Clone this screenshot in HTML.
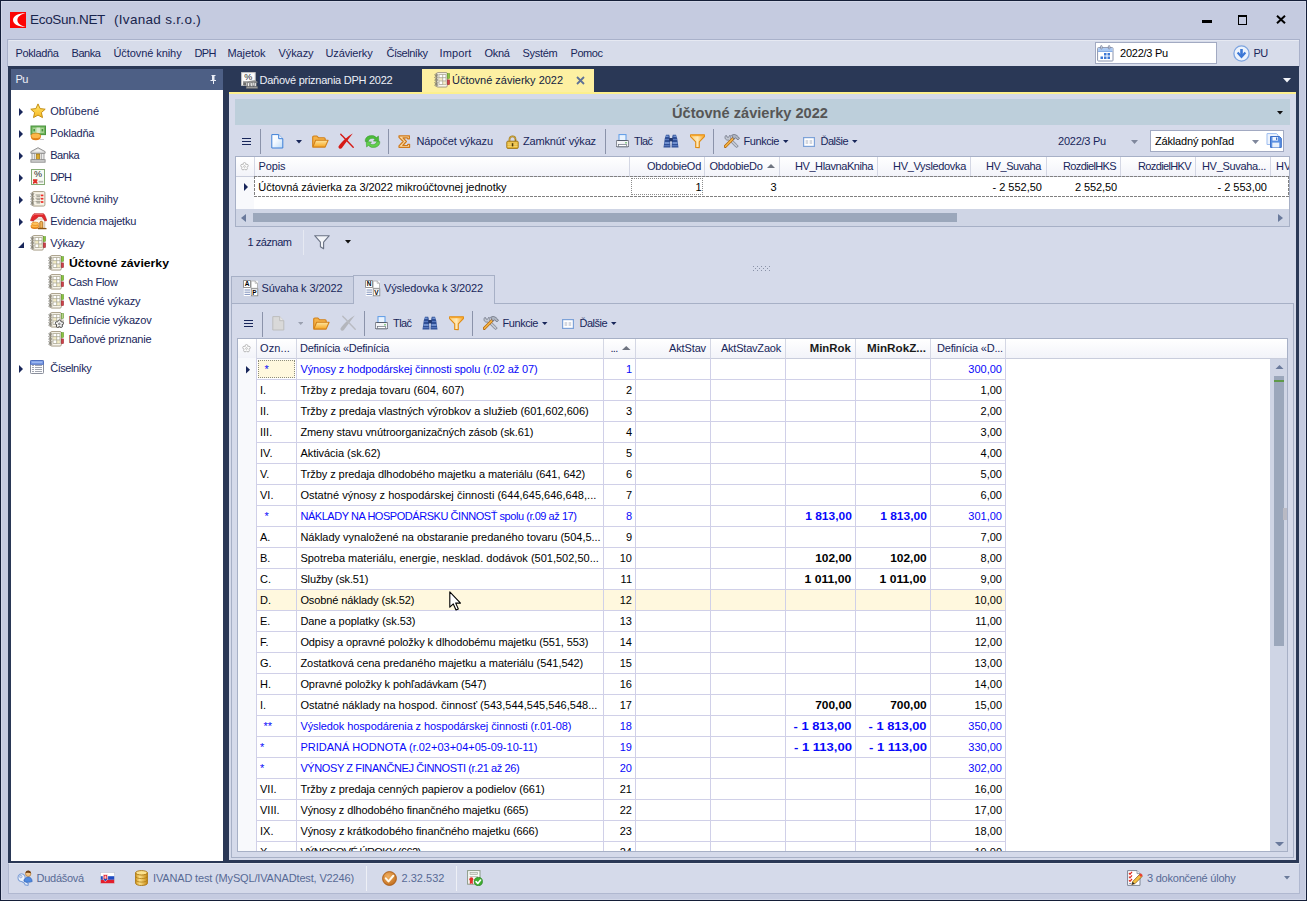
<!DOCTYPE html>
<html lang="sk"><head><meta charset="utf-8"><title>EcoSun.NET</title><style>
html,body{margin:0;padding:0}
body{width:1307px;height:901px;position:relative;overflow:hidden;background:#c5cbe0;font-family:"Liberation Sans",sans-serif;font-size:11px;color:#18265a}
div,span.t,svg{position:absolute;box-sizing:border-box}
span.t{white-space:nowrap;line-height:14px}
.b{font-weight:bold}
.k{color:#000}
.blue{color:#0808fa}
.w{color:#edf0f8}
.g{color:#586a96}
</style></head><body>
<div style="left:0px;top:0px;width:1307px;height:901px;background:#c5cbe0;border:1px solid #141e38"></div>
<div style="left:1px;top:1px;width:1305px;height:899px;border:1px solid #d2d7e8"></div>
<svg style="left:10px;top:12px" width="16" height="16" viewBox="0 0 16 16"><rect width="16" height="16" fill="#fc0404"/><path d="M15.500 1.200C9 1 3 3.600 3 8s6 7 12.500 6.800C10.500 13.600 7.400 11.200 7.400 8s3.100-5.600 8.100-6.800z" fill="#fff"/></svg>
<span class="t" style="left:30px;top:12px;font-size:13.5px;line-height:16px;color:#18244c;letter-spacing:-0.30px;">EcoSun.NET</span>
<span class="t" style="left:114px;top:12px;font-size:13.5px;line-height:16px;color:#18244c;letter-spacing:0.30px;">(Ivanad s.r.o.)</span>
<div style="left:1202px;top:20px;width:10px;height:3px;background:#000"></div>
<div style="left:1238px;top:15px;width:9px;height:10px;border:1px solid #000;border-top-width:2px"></div>
<svg style="left:1276px;top:15px" width="10" height="9" viewBox="0 0 10 9"><path d="M1 .8l8 7.400M9 .8L1 8.200" stroke="#000" stroke-width="2"/></svg>
<div style="left:7px;top:39px;width:1293px;height:28px;background:#d7dcea;border:1px solid #a9b1ca;border-bottom:none"></div>
<div style="left:9px;top:40px;width:1290px;height:1px;background:#e6e9f2"></div>
<span class="t" style="left:15.5px;top:46px;letter-spacing:-0.36px;">Pokladňa</span>
<span class="t" style="left:71.5px;top:46px;letter-spacing:-0.44px;">Banka</span>
<span class="t" style="left:113.5px;top:46px;letter-spacing:-0.08px;">Účtovné knihy</span>
<span class="t" style="left:194.5px;top:46px;letter-spacing:-0.70px;">DPH</span>
<span class="t" style="left:227.5px;top:46px;letter-spacing:-0.08px;">Majetok</span>
<span class="t" style="left:278.5px;top:46px;letter-spacing:-0.08px;">Výkazy</span>
<span class="t" style="left:325.5px;top:46px;letter-spacing:-0.14px;">Uzávierky</span>
<span class="t" style="left:386.5px;top:46px;letter-spacing:-0.47px;">Číselníky</span>
<span class="t" style="left:439.5px;top:46px;letter-spacing:0.14px;">Import</span>
<span class="t" style="left:484.5px;top:46px;letter-spacing:-0.32px;">Okná</span>
<span class="t" style="left:522.5px;top:46px;letter-spacing:-0.28px;">Systém</span>
<span class="t" style="left:570.5px;top:46px;letter-spacing:-0.45px;">Pomoc</span>
<div style="left:1095px;top:42px;width:122px;height:22px;background:#fff;border:1px solid #a2aac2"></div>
<svg style="left:1097px;top:45px" width="17" height="17" viewBox="0 0 17 17"><rect x=".6" y="2.600" width="15.400" height="13.400" rx=".8" fill="#fff" stroke="#8a94ae" stroke-width="1"/><rect x="1.100" y="3.100" width="14.400" height="3.200" fill="#a9c8f2"/><path d="M1.100 6.500h14.400" stroke="#6d9ae0" stroke-width=".8"/><rect x="3.600" y=".6" width="1.500" height="3.400" rx=".7" fill="#e8ecf4" stroke="#6c7690" stroke-width=".7"/><rect x="11.400" y=".6" width="1.500" height="3.400" rx=".7" fill="#e8ecf4" stroke="#6c7690" stroke-width=".7"/><g fill="#3d78d6"><rect x="7" y="8" width="2.500" height="2.500"/><rect x="10.500" y="8" width="2.500" height="2.500"/><rect x="3.500" y="11.500" width="2.500" height="2.500"/><rect x="7" y="11.500" width="2.500" height="2.500"/><rect x="10.500" y="11.500" width="2.500" height="2.500"/></g></svg>
<span class="t k" style="left:1120px;top:46px;letter-spacing:-0.24px;">2022/3 Pu</span>
<svg style="left:1233px;top:44.5px" width="17" height="17" viewBox="0 0 17 17"><circle cx="8.500" cy="8.500" r="7.600" fill="#edf3fc" stroke="#7da4e0" stroke-width="1.300"/><path d="M8.500 4v7.500" stroke="#3d78d6" stroke-width="2.600"/><path d="M4.600 7.600l3.900 4.200 3.900-4.200" fill="none" stroke="#3d78d6" stroke-width="2.200" stroke-linejoin="miter"/></svg>
<span class="t" style="left:1253.5px;top:46px;letter-spacing:-0.70px;">PU</span>
<div style="left:8px;top:66px;width:1291px;height:797px;background:#2a3856"></div>
<div style="left:11px;top:69px;width:212px;height:21px;background:#4d5f85"></div>
<span class="t w" style="left:15.5px;top:72px;letter-spacing:-0.70px;">Pu</span>
<svg style="left:210px;top:74.5px" width="7" height="9" viewBox="0 0 7 9"><path d="M1.500 0h4v1h-1v4h1.500v1H4v3H3V6H.5V5H2V1H1.500z" fill="#e9edf6"/></svg>
<div style="left:11px;top:90px;width:212px;height:771px;background:#fff"></div>
<svg style="left:19px;top:108px" width="4" height="8" viewBox="0 0 4 8"><path d="M0 0L4 4L0 8Z" fill="#18265a"/></svg>
<svg style="left:30px;top:103px" width="16" height="16" viewBox="0 0 16 16"><defs><linearGradient id="st" x1="0" y1="0" x2="0" y2="1"><stop offset="0" stop-color="#ffe770"/><stop offset="1" stop-color="#f8b820"/></linearGradient></defs><path d="M8 .9l2.100 4.700 5.100.6-3.800 3.400 1.100 5L8 12.100l-4.500 2.500 1.100-5L.8 6.200l5.100-.6z" fill="url(#st)" stroke="#c48e14" stroke-width="1" stroke-linejoin="round"/></svg>
<span class="t" style="left:50.2px;top:104px;letter-spacing:0.07px;">Obľúbené</span>
<svg style="left:19px;top:130px" width="4" height="8" viewBox="0 0 4 8"><path d="M0 0L4 4L0 8Z" fill="#18265a"/></svg>
<svg style="left:30px;top:125px" width="16" height="16" viewBox="0 0 16 16"><rect x="1" y="1" width="14.500" height="8.600" fill="#6fb55a" stroke="#4a9440" stroke-width="1"/><rect x="2.600" y="2.600" width="11.300" height="5.400" fill="#a9d596"/><rect x="6.500" y="2.600" width="3.600" height="5.400" fill="#d9eccf"/><rect x="3.400" y="4" width="1.600" height="2.400" fill="#4a9440"/><rect x="11.600" y="4" width="1.600" height="2.400" fill="#4a9440"/><ellipse cx="5.800" cy="12.300" rx="4.800" ry="2.900" fill="#e27c14"/><ellipse cx="5.800" cy="10.900" rx="4.800" ry="2.700" fill="#fdb84a" stroke="#dd7c12" stroke-width=".7"/><path d="M10 14.500h4" stroke="#c9c9c9" stroke-width="1"/></svg>
<span class="t" style="left:50.2px;top:126px;letter-spacing:-0.23px;">Pokladňa</span>
<svg style="left:19px;top:152px" width="4" height="8" viewBox="0 0 4 8"><path d="M0 0L4 4L0 8Z" fill="#18265a"/></svg>
<svg style="left:30px;top:147px" width="16" height="16" viewBox="0 0 16 16"><path d="M8 .7L.9 4.600v1.700h14.200V4.600z" fill="#dcdcdc" stroke="#8c8c8c" stroke-width=".9" stroke-linejoin="round"/><path d="M8 2L3.300 4.600h9.400z" fill="#f4f4f4"/><rect x="2" y="6.600" width="2.800" height="6" fill="#ececec" stroke="#8c8c8c" stroke-width=".8"/><rect x="11.200" y="6.600" width="2.800" height="6" fill="#ececec" stroke="#8c8c8c" stroke-width=".8"/><rect x="6.300" y="7" width="3.400" height="5.600" fill="#d9a82c" stroke="#9a7414" stroke-width=".7"/><rect x=".9" y="12.700" width="14.200" height="2.500" fill="#d2d2d2" stroke="#8c8c8c" stroke-width=".9"/></svg>
<span class="t" style="left:50.2px;top:148px;letter-spacing:-0.44px;">Banka</span>
<svg style="left:19px;top:174px" width="4" height="8" viewBox="0 0 4 8"><path d="M0 0L4 4L0 8Z" fill="#18265a"/></svg>
<svg style="left:30px;top:169px" width="16" height="16" viewBox="0 0 16 16"><rect x="1.500" y=".5" width="13" height="15" fill="#f7faf4" stroke="#84ab74" stroke-width="1"/><text x="8" y="8.300" font-size="9" font-family="Liberation Sans,sans-serif" text-anchor="middle" fill="#1a1a1a">%</text><path d="M3 10.200h4.400v1.600l-.8.600.8.600v2l-2.200-.9-2.200.9v-2l.8-.6-.8-.6z" fill="#de2f28"/><rect x="8.600" y="11.800" width="4.600" height="1.800" fill="#b8bcb4"/></svg>
<span class="t" style="left:50.2px;top:170px;letter-spacing:-0.70px;">DPH</span>
<svg style="left:19px;top:196px" width="4" height="8" viewBox="0 0 4 8"><path d="M0 0L4 4L0 8Z" fill="#18265a"/></svg>
<svg style="left:30px;top:191px" width="16" height="16" viewBox="0 0 16 17" preserveAspectRatio="none"><rect x="2.500" y=".6" width="12.400" height="15.400" rx="1.300" fill="#f6f2e6" stroke="#a59c86" stroke-width="1"/><g fill="none" stroke="#77746a" stroke-width=".8"><ellipse cx="2.300" cy="3" rx="1.600" ry=".9"/><ellipse cx="2.300" cy="5.800" rx="1.600" ry=".9"/><ellipse cx="2.300" cy="8.600" rx="1.600" ry=".9"/><ellipse cx="2.300" cy="11.400" rx="1.600" ry=".9"/><ellipse cx="2.300" cy="14" rx="1.600" ry=".9"/></g><g stroke="#8e8a7c" stroke-width=".8"><path d="M5.500 4.200h5M5.500 7.700h5M5.500 11.200h5"/></g><g fill="#a9a79c"><rect x="6.500" y="4.800" width="3.500" height="1.500"/><rect x="6.500" y="8.300" width="3.500" height="1.500"/><rect x="6.500" y="11.800" width="3.500" height="1.500"/></g><g fill="#ee2a24"><rect x="10.800" y="3.800" width="2.600" height="1.800"/><rect x="10.800" y="7.300" width="2.600" height="1.800"/><rect x="10.800" y="10.800" width="2.600" height="1.800"/></g></svg>
<span class="t" style="left:50.2px;top:192px;letter-spacing:-0.08px;">Účtovné knihy</span>
<svg style="left:19px;top:218px" width="4" height="8" viewBox="0 0 4 8"><path d="M0 0L4 4L0 8Z" fill="#18265a"/></svg>
<svg style="left:30px;top:213px" width="17" height="17" viewBox="0 0 17 17"><rect x="3.300" y="6" width="11.500" height="9.200" fill="#fbf8f2" stroke="#b9a88c" stroke-width=".7"/><path d="M.5 7.600C1.400 4.500 2.800 1.600 4 .7h9.500c1.300 1 2.400 3.800 3.200 6.900l-1.800.3L12 3.800 8.800 3.600 3 8z" fill="#e3262a" stroke="#b01418" stroke-width=".6" stroke-linejoin="round"/><path d="M2.800 3.200C3.400 2 3.900 1.400 4.300 1.200h9" stroke="#f58a86" stroke-width=".9" fill="none"/><path d="M9.800 15.200V9.800c0-1 .6-1.500 1.500-1.500s1.500.5 1.500 1.500v5.400z" fill="#f0b45a" stroke="#a4600e" stroke-width=".8"/><path d="M8 15.600h8.500" stroke="#8a5412" stroke-width="1.300"/><ellipse cx="4.800" cy="14" rx="4" ry="1.900" fill="#e27c14"/><ellipse cx="4.800" cy="13" rx="4" ry="1.800" fill="#fdb84a" stroke="#dd7c12" stroke-width=".6"/><ellipse cx="5.200" cy="10.800" rx="3.600" ry="1.700" fill="#fdc25e" stroke="#dd7c12" stroke-width=".6"/></svg>
<span class="t" style="left:50.2px;top:214px;letter-spacing:-0.19px;">Evidencia majetku</span>
<svg style="left:18px;top:241.5px" width="6" height="6" viewBox="0 0 6 6"><path d="M6 0V6H0Z" fill="#18265a"/></svg>
<svg style="left:30px;top:235px" width="16" height="16" viewBox="0 0 16 17" preserveAspectRatio="none"><rect x="2.500" y=".6" width="10.800" height="15.400" rx="1.300" fill="#f8f5ec" stroke="#a59c86" stroke-width="1"/><g fill="none" stroke="#77746a" stroke-width=".8"><ellipse cx="2.300" cy="3" rx="1.600" ry=".9"/><ellipse cx="2.300" cy="5.800" rx="1.600" ry=".9"/><ellipse cx="2.300" cy="8.600" rx="1.600" ry=".9"/><ellipse cx="2.300" cy="11.400" rx="1.600" ry=".9"/><ellipse cx="2.300" cy="14" rx="1.600" ry=".9"/></g><rect x="13.300" y="1.800" width="2.200" height="5" fill="#8cc63e" stroke="#5f962a" stroke-width=".6"/><rect x="13.300" y="8.400" width="2.200" height="5" fill="#d2404a" stroke="#9a2a30" stroke-width=".6"/><rect x="5" y="2.800" width="7" height="10.600" fill="#fff" stroke="#a8a48e" stroke-width=".8"/><rect x="5.400" y="6.200" width="3.200" height="3" fill="#f4ecc4"/><rect x="8.800" y="9.800" width="2.800" height="3.200" fill="#f4ecc4"/><path d="M5 6h7M5 9.500h7M8.700 2.800v10.600" stroke="#a8a48e" stroke-width=".8"/></svg>
<span class="t" style="left:50.2px;top:236px;letter-spacing:-0.24px;">Výkazy</span>
<svg style="left:48px;top:255px" width="16" height="16" viewBox="0 0 16 17" preserveAspectRatio="none"><rect x="2.500" y=".6" width="10.800" height="15.400" rx="1.300" fill="#f8f5ec" stroke="#a59c86" stroke-width="1"/><g fill="none" stroke="#77746a" stroke-width=".8"><ellipse cx="2.300" cy="3" rx="1.600" ry=".9"/><ellipse cx="2.300" cy="5.800" rx="1.600" ry=".9"/><ellipse cx="2.300" cy="8.600" rx="1.600" ry=".9"/><ellipse cx="2.300" cy="11.400" rx="1.600" ry=".9"/><ellipse cx="2.300" cy="14" rx="1.600" ry=".9"/></g><rect x="13.300" y="1.800" width="2.200" height="5" fill="#8cc63e" stroke="#5f962a" stroke-width=".6"/><rect x="13.300" y="8.400" width="2.200" height="5" fill="#d2404a" stroke="#9a2a30" stroke-width=".6"/><rect x="5" y="2.800" width="7" height="10.600" fill="#fff" stroke="#a8a48e" stroke-width=".8"/><rect x="5.400" y="6.200" width="3.200" height="3" fill="#f4ecc4"/><rect x="8.800" y="9.800" width="2.800" height="3.200" fill="#f4ecc4"/><path d="M5 6h7M5 9.500h7M8.700 2.800v10.600" stroke="#a8a48e" stroke-width=".8"/></svg>
<span class="t b k" style="left:68.5px;top:256px;transform:scaleX(1.112);transform-origin:0 50%;">Účtovné závierky</span>
<svg style="left:48px;top:274px" width="16" height="16" viewBox="0 0 16 17" preserveAspectRatio="none"><rect x="2.500" y=".6" width="10.800" height="15.400" rx="1.300" fill="#f8f5ec" stroke="#a59c86" stroke-width="1"/><g fill="none" stroke="#77746a" stroke-width=".8"><ellipse cx="2.300" cy="3" rx="1.600" ry=".9"/><ellipse cx="2.300" cy="5.800" rx="1.600" ry=".9"/><ellipse cx="2.300" cy="8.600" rx="1.600" ry=".9"/><ellipse cx="2.300" cy="11.400" rx="1.600" ry=".9"/><ellipse cx="2.300" cy="14" rx="1.600" ry=".9"/></g><rect x="13.300" y="1.800" width="2.200" height="5" fill="#8cc63e" stroke="#5f962a" stroke-width=".6"/><rect x="13.300" y="8.400" width="2.200" height="5" fill="#d2404a" stroke="#9a2a30" stroke-width=".6"/><rect x="5" y="2.800" width="7" height="10.600" fill="#fff" stroke="#a8a48e" stroke-width=".8"/><rect x="5.400" y="6.200" width="3.200" height="3" fill="#f4ecc4"/><rect x="8.800" y="9.800" width="2.800" height="3.200" fill="#f4ecc4"/><path d="M5 6h7M5 9.500h7M8.700 2.800v10.600" stroke="#a8a48e" stroke-width=".8"/></svg>
<span class="t" style="left:68.5px;top:275px;letter-spacing:-0.33px;">Cash Flow</span>
<svg style="left:48px;top:293px" width="16" height="16" viewBox="0 0 16 17" preserveAspectRatio="none"><rect x="2.500" y=".6" width="10.800" height="15.400" rx="1.300" fill="#f8f5ec" stroke="#a59c86" stroke-width="1"/><g fill="none" stroke="#77746a" stroke-width=".8"><ellipse cx="2.300" cy="3" rx="1.600" ry=".9"/><ellipse cx="2.300" cy="5.800" rx="1.600" ry=".9"/><ellipse cx="2.300" cy="8.600" rx="1.600" ry=".9"/><ellipse cx="2.300" cy="11.400" rx="1.600" ry=".9"/><ellipse cx="2.300" cy="14" rx="1.600" ry=".9"/></g><rect x="13.300" y="1.800" width="2.200" height="5" fill="#8cc63e" stroke="#5f962a" stroke-width=".6"/><rect x="13.300" y="8.400" width="2.200" height="5" fill="#d2404a" stroke="#9a2a30" stroke-width=".6"/><rect x="5" y="2.800" width="7" height="10.600" fill="#fff" stroke="#a8a48e" stroke-width=".8"/><rect x="5.400" y="6.200" width="3.200" height="3" fill="#f4ecc4"/><rect x="8.800" y="9.800" width="2.800" height="3.200" fill="#f4ecc4"/><path d="M5 6h7M5 9.500h7M8.700 2.800v10.600" stroke="#a8a48e" stroke-width=".8"/></svg>
<span class="t" style="left:68.5px;top:294px;letter-spacing:-0.10px;">Vlastné výkazy</span>
<svg style="left:48px;top:312px" width="16" height="16" viewBox="0 0 16 17" preserveAspectRatio="none"><rect x="2.500" y=".6" width="10.800" height="15.400" rx="1.300" fill="#f8f5ec" stroke="#a59c86" stroke-width="1"/><g fill="none" stroke="#77746a" stroke-width=".8"><ellipse cx="2.300" cy="3" rx="1.600" ry=".9"/><ellipse cx="2.300" cy="5.800" rx="1.600" ry=".9"/><ellipse cx="2.300" cy="8.600" rx="1.600" ry=".9"/><ellipse cx="2.300" cy="11.400" rx="1.600" ry=".9"/><ellipse cx="2.300" cy="14" rx="1.600" ry=".9"/></g><rect x="13.300" y="1.800" width="2.200" height="5" fill="#b8d48c" stroke="#5f962a" stroke-width=".6"/><rect x="13.300" y="8.400" width="2.200" height="5" fill="#e4e0d6" stroke="#b8b4a8" stroke-width=".6"/><rect x="5" y="2.800" width="7" height="10.600" fill="#fff" stroke="#a8a48e" stroke-width=".8"/><rect x="5.400" y="6.200" width="3.200" height="3" fill="#f4ecc4"/><rect x="8.800" y="9.800" width="2.800" height="3.200" fill="#f4ecc4"/><path d="M5 6h7M5 9.500h7M8.700 2.800v10.600" stroke="#a8a48e" stroke-width=".8"/><g fill="#fafafa" stroke="#3c3c3c" stroke-width=".9"><circle cx="11.400" cy="10" r="1.500"/><circle cx="14" cy="11.900" r="1.500"/><circle cx="13" cy="14.900" r="1.500"/><circle cx="9.800" cy="14.900" r="1.500"/><circle cx="8.800" cy="11.900" r="1.500"/></g><circle cx="11.400" cy="12.700" r="2.500" fill="#fafafa"/><circle cx="11.400" cy="12.700" r=".9" fill="none" stroke="#3c3c3c" stroke-width=".7"/></svg>
<span class="t" style="left:68.5px;top:313px;letter-spacing:-0.15px;">Definície výkazov</span>
<svg style="left:48px;top:331px" width="16" height="16" viewBox="0 0 16 17" preserveAspectRatio="none"><rect x="2.500" y=".6" width="10.800" height="15.400" rx="1.300" fill="#f8f5ec" stroke="#a59c86" stroke-width="1"/><g fill="none" stroke="#77746a" stroke-width=".8"><ellipse cx="2.300" cy="3" rx="1.600" ry=".9"/><ellipse cx="2.300" cy="5.800" rx="1.600" ry=".9"/><ellipse cx="2.300" cy="8.600" rx="1.600" ry=".9"/><ellipse cx="2.300" cy="11.400" rx="1.600" ry=".9"/><ellipse cx="2.300" cy="14" rx="1.600" ry=".9"/></g><rect x="13.300" y="1.800" width="2.200" height="5" fill="#8cc63e" stroke="#5f962a" stroke-width=".6"/><rect x="13.300" y="8.400" width="2.200" height="5" fill="#d2404a" stroke="#9a2a30" stroke-width=".6"/><rect x="5" y="2.800" width="7" height="10.600" fill="#fff" stroke="#a8a48e" stroke-width=".8"/><rect x="5.400" y="6.200" width="3.200" height="3" fill="#f4ecc4"/><rect x="8.800" y="9.800" width="2.800" height="3.200" fill="#f4ecc4"/><path d="M5 6h7M5 9.500h7M8.700 2.800v10.600" stroke="#a8a48e" stroke-width=".8"/></svg>
<span class="t" style="left:68.5px;top:332px;letter-spacing:-0.16px;">Daňové priznanie</span>
<svg style="left:19px;top:365px" width="4" height="8" viewBox="0 0 4 8"><path d="M0 0L4 4L0 8Z" fill="#18265a"/></svg>
<svg style="left:30px;top:360px" width="14" height="14" viewBox="0 0 14 14"><rect x=".5" y=".5" width="13" height="13" rx=".8" fill="#fdfdfe" stroke="#8a8f9c" stroke-width="1"/><path d="M.5 4.300V1.300c0-.5.300-.8.800-.8h11.400c.5 0 .8.300.8.800v3z" fill="#7d9ee6" stroke="#5070c0" stroke-width="1"/><path d="M2 2.200h10" stroke="#a9c2f4" stroke-width="1"/><path d="M2 5.500h2M5 5.500h7M2 7.500h2M5 7.500h7M2 9.500h2M5 9.500h7M2 11.500h2M5 11.500h7" stroke="#a2a6b0" stroke-width="1" fill="none"/></svg>
<span class="t" style="left:50.2px;top:361px;letter-spacing:-0.47px;">Číselníky</span>
<svg style="left:241px;top:71.5px" width="17" height="17" viewBox="0 0 17 17"><rect x=".6" y=".6" width="13.600" height="12.800" fill="#fcfcfc" stroke="#c4c4c4" stroke-width="1"/><text x="7.200" y="8" font-size="9" font-family="Liberation Sans,sans-serif" text-anchor="middle" fill="#1a1a1a">%</text><path d="M2.600 8.400l1.800 4.600h-2.400z" fill="#7e7e7e"/><path d="M2.500 9.300h4l7-1 3 1.400v1H2.500z" fill="#8c8c8c"/><g fill="#f2f2f2" stroke="#6c6c6c" stroke-width=".7"><rect x="6.400" y="10.700" width="2" height="4"/><rect x="9.800" y="10.700" width="2" height="4"/><rect x="13.200" y="10.700" width="2" height="4"/></g><rect x="5.200" y="14.700" width="11.500" height="1.700" fill="#9a9a9a" stroke="#6c6c6c" stroke-width=".5"/><rect x="2.600" y="10.500" width="2.800" height="3" fill="#6e6e6e"/></svg>
<span class="t w" style="left:259.5px;top:73px;letter-spacing:-0.26px;">Daňové priznania DPH 2022</span>
<div style="left:422px;top:69px;width:172px;height:24px;background:#fdf0a2"></div>
<svg style="left:434px;top:72px" width="16" height="16" viewBox="0 0 16 17" preserveAspectRatio="none"><rect x="2.500" y=".6" width="10.800" height="15.400" rx="1.300" fill="#f8f5ec" stroke="#a59c86" stroke-width="1"/><g fill="none" stroke="#77746a" stroke-width=".8"><ellipse cx="2.300" cy="3" rx="1.600" ry=".9"/><ellipse cx="2.300" cy="5.800" rx="1.600" ry=".9"/><ellipse cx="2.300" cy="8.600" rx="1.600" ry=".9"/><ellipse cx="2.300" cy="11.400" rx="1.600" ry=".9"/><ellipse cx="2.300" cy="14" rx="1.600" ry=".9"/></g><rect x="13.300" y="1.800" width="2.200" height="5" fill="#8cc63e" stroke="#5f962a" stroke-width=".6"/><rect x="13.300" y="8.400" width="2.200" height="5" fill="#d2404a" stroke="#9a2a30" stroke-width=".6"/><rect x="5" y="2.800" width="7" height="10.600" fill="#fff" stroke="#a8a48e" stroke-width=".8"/><rect x="5.400" y="6.200" width="3.200" height="3" fill="#f4ecc4"/><rect x="8.800" y="9.800" width="2.800" height="3.200" fill="#f4ecc4"/><path d="M5 6h7M5 9.500h7M8.700 2.800v10.600" stroke="#a8a48e" stroke-width=".8"/></svg>
<span class="t" style="left:452px;top:73px;color:#121c40;letter-spacing:-0.01px;">Účtovné závierky 2022</span>
<svg style="left:576px;top:76px" width="9" height="9" viewBox="0 0 9 9"><path d="M1 1l7 7M8 1L1 8" stroke="#5f7196" stroke-width="1.800"/></svg>
<svg style="left:1283px;top:78px" width="8" height="4.5" viewBox="0 0 8 4.5"><path d="M0 0L8 0L4 4.5Z" fill="#f4f6fb"/></svg>
<div style="left:229px;top:92px;width:1067px;height:768px;background:#d5daea;border-top:2px solid #fdf08e"></div>
<div style="left:235px;top:99px;width:1055px;height:26px;background:#bdcfdb"></div>
<span class="t b" style="left:672px;top:103.5px;font-size:15px;line-height:18px;color:#565656;transform:scaleX(0.974);transform-origin:0 50%;">Účtovné závierky 2022</span>
<svg style="left:1277px;top:111px" width="6" height="3.5" viewBox="0 0 6 3.5"><path d="M0 0L6 0L3 3.5Z" fill="#111"/></svg>
<div style="left:242px;top:138px;width:9px;height:1px;background:#18265a"></div>
<div style="left:242px;top:141px;width:9px;height:1px;background:#18265a"></div>
<div style="left:242px;top:144px;width:9px;height:1px;background:#18265a"></div>
<div style="left:260px;top:129px;width:1px;height:25px;background:#8b93aa"></div>
<svg style="left:270.5px;top:133.5px" width="13" height="15" viewBox="0 0 13 15"><defs><linearGradient id="nd" x1="0" y1="0" x2=".9" y2="1"><stop offset="0" stop-color="#fff"/><stop offset=".45" stop-color="#f4f9ff"/><stop offset="1" stop-color="#c2def8"/></linearGradient></defs><path d="M.8 .6h6.900l4.100 4.100v9.300H.8z" fill="url(#nd)" stroke="#3d7fd8" stroke-width="1"/><path d="M7.700 .6v4.100h4.100" fill="#eaf3fd" stroke="#3d7fd8" stroke-width="1"/></svg>
<svg style="left:296px;top:140px" width="6" height="3.5" viewBox="0 0 6 3.5"><path d="M0 0L6 0L3 3.5Z" fill="#18265a"/></svg>
<svg style="left:311.5px;top:134.5px" width="17" height="13" viewBox="0 0 17 13"><defs><linearGradient id="fo" x1="0" y1="0" x2="0" y2="1"><stop offset="0" stop-color="#fde7a4"/><stop offset="1" stop-color="#f7a51e"/></linearGradient></defs><path d="M.7 11.800V2.200c0-.7.500-1.200 1.200-1.200h3l1.500 1.700h5.600c.7 0 1.200.5 1.200 1.200v1.500" fill="#f5b246" stroke="#d1801a" stroke-width="1.100" stroke-linejoin="round"/><path d="M3.600 5.200h12.500l-3 6.900H.8z" fill="url(#fo)" stroke="#d1801a" stroke-width="1.100" stroke-linejoin="round"/></svg>
<svg style="left:338px;top:133px" width="16" height="16" viewBox="0 0 16 16"><path d="M.5 13.600C3.400 9.300 9 3.800 14.800 .6 11 5.500 6.600 11.400 3.700 15.300 2.600 16.400 .1 15.500 .5 13.600z" fill="#d61a16"/><path d="M2.800 1.200C6.500 5.200 10.800 10 15.200 14.200" stroke="#d61a16" stroke-width="1.400" fill="none" stroke-linecap="round"/></svg>
<svg style="left:364px;top:134.5px" width="17" height="13" viewBox="0 0 17 13"><path d="M1.200 6.400A6.400 5.600 0 0 1 12.600 2.600L14.400 1l.4 5.400-5.400-.5 1.700-1.500A4 3.400 0 0 0 4.200 6.400z" fill="#4cbc3a" stroke="#339428" stroke-width=".5" stroke-linejoin="round"/><path d="M15.800 6.600A6.400 5.600 0 0 1 4.400 10.400L2.600 12l-.4-5.400 5.400.5-1.700 1.500A4 3.400 0 0 0 12.800 6.600z" fill="#62d04e" stroke="#339428" stroke-width=".5" stroke-linejoin="round"/></svg>
<div style="left:388px;top:129px;width:1px;height:25px;background:#8b93aa"></div>
<svg style="left:398px;top:134.5px" width="13" height="13" viewBox="0 0 13 13"><path d="M1 .8h10.400v3h-1.700l-.4-1H5l3.400 3.700L4.800 10.500h4.600l.5-1.200h1.700v3H1v-1.500L5.200 6.500 1 2.300z" fill="#fbd9a0" stroke="#cf7a1c" stroke-width="1.200" stroke-linejoin="round"/></svg>
<span class="t" style="left:416.5px;top:134px;letter-spacing:-0.13px;">Nápočet výkazu</span>
<svg style="left:505.5px;top:134.5px" width="13" height="14" viewBox="0 0 13 14"><path d="M3.500 6.500V4.300a3 3 0 0 1 6 0v2.200" fill="none" stroke="#a07818" stroke-width="1.700"/><path d="M3.500 6V4.300a3 3 0 0 1 6 0" fill="none" stroke="#e6c25a" stroke-width=".6"/><rect x=".8" y="6.200" width="11.400" height="7.200" rx="1" fill="#e7b42e" stroke="#9a7212" stroke-width=".9"/><path d="M1.500 8h10M1.500 9.800h10M1.500 11.600h10" stroke="#f6dc86" stroke-width=".8"/><rect x="5.800" y="8.200" width="1.500" height="3.200" fill="#4a380a"/></svg>
<span class="t" style="left:523px;top:134px;letter-spacing:-0.16px;">Zamknúť výkaz</span>
<div style="left:605px;top:129px;width:1px;height:25px;background:#8b93aa"></div>
<svg style="left:615.5px;top:133.5px" width="13" height="14" viewBox="0 0 13 14"><rect x="3" y=".6" width="7" height="6" fill="#e9f3fe" stroke="#5c9ae6" stroke-width="1"/><path d="M1.200 6.500h10.600c.6 0 1 .4 1 1v4.300c0 .6-.4 1-1 1H1.200c-.6 0-1-.4-1-1V7.500c0-.6.400-1 1-1z" fill="#f2f3f6" stroke="#4a4f5c" stroke-width=".9"/><rect x="2.600" y="10.600" width="7.800" height="2" fill="#fff" stroke="#6c7280" stroke-width=".7"/><rect x="9.300" y="8.200" width="1.400" height="1.200" fill="#3fae3a"/></svg>
<span class="t" style="left:634px;top:134px;letter-spacing:-0.57px;">Tlač</span>
<svg style="left:663px;top:134px" width="16" height="14" viewBox="0 0 16 14"><path d="M3 .8h3.200l.5 2 .8 10.600H.5L1.800 4.500z" fill="#2f4f96"/><path d="M13 .8H9.800l-.5 2-.8 10.600h7L14.200 4.500z" fill="#2f4f96"/><rect x="6.200" y="4" width="3.600" height="3.400" fill="#22386e"/><path d="M2.600 2.200h3M10.400 2.200h3" stroke="#8fb0ea" stroke-width="1"/><path d="M1.500 9h5M9.500 9h5" stroke="#86a5e0" stroke-width="1.400"/><path d="M1.200 11.600h5.500M9.300 11.600h5.500" stroke="#5676bc" stroke-width="1.200"/><path d="M2 5.500h4M10 5.500h4" stroke="#5878be" stroke-width="1"/></svg>
<svg style="left:689.5px;top:133.5px" width="15" height="15" viewBox="0 0 15 15"><defs><linearGradient id="fu" x1="0" y1="0" x2="1" y2="0"><stop offset="0" stop-color="#fdd27a"/><stop offset=".5" stop-color="#ffe9b8"/><stop offset="1" stop-color="#f8a628"/></linearGradient></defs><path d="M.6 .8h13.800v1.800L9.300 7.800v5.800l-3.600-.1V7.800L.6 2.600z" fill="url(#fu)" stroke="#e08c14" stroke-width="1.100" stroke-linejoin="round"/><path d="M1.500 1.600h12" stroke="#f8a628" stroke-width="1.200"/></svg>
<div style="left:713px;top:129px;width:1px;height:25px;background:#8b93aa"></div>
<svg style="left:724px;top:134px" width="16" height="14" viewBox="0 0 16 14"><path d="M2 1.200C.8 2.200.6 4 1.600 5.200c.9 1 2.200 1.200 3.300.8l6.800 7c.5.500 1.300.5 1.800 0s.5-1.300 0-1.800L6.600 4.400c.4-1.100.2-2.400-.7-3.300L4.600 3.300 3 3.100 2.600 1.700z" fill="#c3c8d2" stroke="#6a7080" stroke-width=".7"/><path d="M1.300 12.400L9.400 4.200" stroke="#b56a10" stroke-width="3" stroke-linecap="round"/><path d="M1.500 12.200L9.300 4.300" stroke="#f6b648" stroke-width="1.600" stroke-linecap="round"/><path d="M7.600 1.200l2.600-.8c2.200.4 4 1.800 5.200 4l-1.600 1.600c-.8-1.200-1.800-1.900-2.600-2.100L9.800 5.300z" fill="#aeb4c0" stroke="#5e6474" stroke-width=".7" stroke-linejoin="round"/></svg>
<span class="t" style="left:743.5px;top:134px;letter-spacing:-0.43px;">Funkcie</span>
<svg style="left:783px;top:140px" width="5.5" height="3" viewBox="0 0 5.5 3"><path d="M0 0L5.5 0L2.75 3Z" fill="#18265a"/></svg>
<svg style="left:803px;top:136.5px" width="12" height="10" viewBox="0 0 12 10"><rect x=".6" y=".6" width="10.800" height="8.800" fill="#fff" stroke="#7da2d8" stroke-width="1.200"/><rect x="2.600" y="3" width="2.600" height="4" fill="#d4d8e0"/><rect x="6.600" y="3" width="2.600" height="4" fill="#d4d8e0"/></svg>
<span class="t" style="left:820.5px;top:134px;letter-spacing:-0.51px;">Ďalšie</span>
<svg style="left:852px;top:140px" width="5.5" height="3" viewBox="0 0 5.5 3"><path d="M0 0L5.5 0L2.75 3Z" fill="#18265a"/></svg>
<span class="t" style="left:1058px;top:134px;letter-spacing:-0.24px;">2022/3 Pu</span>
<svg style="left:1131px;top:139.5px" width="7" height="4" viewBox="0 0 7 4"><path d="M0 0L7 0L3.5 4Z" fill="#7f879c"/></svg>
<div style="left:1150px;top:130px;width:134px;height:22px;background:#fff;border:1px solid #a2aac2"></div>
<span class="t k" style="left:1155px;top:134px;letter-spacing:-0.17px;">Základný pohľad</span>
<svg style="left:1252px;top:139.5px" width="7" height="4" viewBox="0 0 7 4"><path d="M0 0L7 0L3.5 4Z" fill="#7f879c"/></svg>
<svg style="left:1265.5px;top:133px" width="16" height="15" viewBox="0 0 16 15"><path d="M1 .6h9.500l1.500 1.500v9.400H1z" fill="#eef4fd" stroke="#9dbdf0" stroke-width="1"/><path d="M4.500 3.500h9l1.800 1.800v9.100H4.500z" fill="#5b90e2" stroke="#3c6fc8" stroke-width="1"/><rect x="6.500" y="4" width="5.500" height="3.600" fill="#f2f6fd"/><rect x="10" y="4.500" width="1.300" height="2.400" fill="#3c6fc8"/><rect x="6.300" y="9.600" width="7" height="4.800" fill="#e8f0fc"/></svg>
<div style="left:235px;top:156px;width:1055px;height:71px;background:#fff;border:1px solid #a7b0c6"></div>
<div style="left:236px;top:157px;width:1053px;height:19px;background:linear-gradient(#ffffff,#f2f3f9)"></div>
<div style="left:236px;top:176px;width:1053px;height:1px;background:#c9cddc"></div>
<div style="left:254px;top:157px;width:1px;height:19px;background:#d4d7e4"></div>
<div style="left:629px;top:157px;width:1px;height:19px;background:#d4d7e4"></div>
<div style="left:704px;top:157px;width:1px;height:19px;background:#d4d7e4"></div>
<div style="left:779px;top:157px;width:1px;height:19px;background:#d4d7e4"></div>
<div style="left:877px;top:157px;width:1px;height:19px;background:#d4d7e4"></div>
<div style="left:970px;top:157px;width:1px;height:19px;background:#d4d7e4"></div>
<div style="left:1046px;top:157px;width:1px;height:19px;background:#d4d7e4"></div>
<div style="left:1120px;top:157px;width:1px;height:19px;background:#d4d7e4"></div>
<div style="left:1195px;top:157px;width:1px;height:19px;background:#d4d7e4"></div>
<div style="left:1270px;top:157px;width:1px;height:19px;background:#d4d7e4"></div>
<svg style="left:240px;top:162px" width="9" height="9" viewBox="0 0 11 11"><g fill="#fff" stroke="#a4a4a4" stroke-width=".9"><circle cx="5.500" cy="2.400" r="1.700"/><circle cx="8.400" cy="4.500" r="1.700"/><circle cx="7.300" cy="7.900" r="1.700"/><circle cx="3.700" cy="7.900" r="1.700"/><circle cx="2.600" cy="4.500" r="1.700"/></g><circle cx="5.500" cy="5.500" r="2.900" fill="#fff"/><circle cx="5.500" cy="5.500" r="1.100" fill="none" stroke="#a4a4a4" stroke-width=".8"/></svg>
<span class="t" style="left:258.5px;top:159px;letter-spacing:-0.11px;">Popis</span>
<span class="t" style="right:606px;top:159px;letter-spacing:-0.25px;">ObdobieOd</span>
<span class="t" style="left:709.5px;top:159px;letter-spacing:-0.30px;">ObdobieDo</span>
<svg style="left:766.5px;top:163.5px" width="8" height="4" viewBox="0 0 8 4"><path d="M0 4L8 4L4 0Z" fill="#6f7480"/></svg>
<span class="t" style="right:434px;top:159px;letter-spacing:-0.41px;">HV_HlavnaKniha</span>
<span class="t" style="right:341px;top:159px;letter-spacing:-0.33px;">HV_Vysledovka</span>
<span class="t" style="right:266px;top:159px;letter-spacing:-0.41px;">HV_Suvaha</span>
<span class="t" style="right:191px;top:159px;letter-spacing:-0.63px;">RozdielHKS</span>
<span class="t" style="right:116px;top:159px;letter-spacing:-0.63px;">RozdielHKV</span>
<span class="t" style="left:1202px;top:159px;letter-spacing:-0.32px;">HV_Suvaha...</span>
<div style="left:1271px;top:157px;width:18px;height:19px;overflow:hidden"><span class="t" style="left:5px;top:2px">HV_</span></div>
<div style="left:236px;top:177px;width:18px;height:32px;background:#f8f9fc"></div>
<svg style="left:244px;top:183px" width="4" height="8" viewBox="0 0 4 8"><path d="M0 0L4 4L0 8Z" fill="#18265a"/></svg>
<div style="left:254px;top:176px;width:1035px;height:1px;background:repeating-linear-gradient(90deg,#808080 0 3px,transparent 3px 4px)"></div>
<div style="left:254px;top:196px;width:1035px;height:1px;background:repeating-linear-gradient(90deg,#808080 0 3px,transparent 3px 4px)"></div>
<div style="left:254px;top:176px;width:1px;height:21px;background:repeating-linear-gradient(180deg,#808080 0 3px,transparent 3px 4px)"></div>
<div style="left:1288px;top:176px;width:1px;height:21px;background:repeating-linear-gradient(180deg,#808080 0 3px,transparent 3px 4px)"></div>
<div style="left:631px;top:178px;width:72px;height:17px;border:1px dotted #8c8c8c"></div>
<span class="t k" style="left:258.3px;top:180px;letter-spacing:-0.05px;">Účtovná závierka za 3/2022 mikroúčtovnej jednotky</span>
<span class="t k" style="right:605.5px;top:180px;">1</span>
<span class="t k" style="right:530.5px;top:180px;">3</span>
<span class="t k" style="right:265px;top:180px;">- 2 552,50</span>
<span class="t k" style="right:190px;top:180px;letter-spacing:-0.10px;">2 552,50</span>
<span class="t k" style="right:40px;top:180px;">- 2 553,00</span>
<div style="left:236px;top:209px;width:1053px;height:17px;background:#cfd5e5"></div>
<svg style="left:241px;top:213.5px" width="5" height="8" viewBox="0 0 5 8"><path d="M5 0L0 4L5 8Z" fill="#6a7a9c"/></svg>
<svg style="left:1278px;top:213.5px" width="5" height="8" viewBox="0 0 5 8"><path d="M0 0L5 4L0 8Z" fill="#6a7a9c"/></svg>
<div style="left:253px;top:213px;width:704px;height:8.5px;background:#9ba7bb"></div>
<span class="t" style="left:247.5px;top:235px;letter-spacing:-0.46px;">1 záznam</span>
<div style="left:303px;top:230px;width:1px;height:25px;background:#e6e9f2"></div>
<svg style="left:314px;top:234.5px" width="16" height="15" viewBox="0 0 16 15"><path d="M.7 .7h14.600L9.600 7.200v6.500l-3.200-2V7.200z" fill="#f2f4f8" stroke="#6a7284" stroke-width="1.100" stroke-linejoin="round"/></svg>
<svg style="left:344.5px;top:240px" width="6" height="3.5" viewBox="0 0 6 3.5"><path d="M0 0L6 0L3 3.5Z" fill="#111"/></svg>
<svg style="left:753px;top:266px" width="18" height="5" viewBox="0 0 18 5"><g fill="#8a92a8"><rect x="0" y="0" width="1" height="1"/><rect x="0" y="4" width="1" height="1"/><rect x="4" y="0" width="1" height="1"/><rect x="4" y="4" width="1" height="1"/><rect x="8" y="0" width="1" height="1"/><rect x="8" y="4" width="1" height="1"/><rect x="12" y="0" width="1" height="1"/><rect x="12" y="4" width="1" height="1"/><rect x="16" y="0" width="1" height="1"/><rect x="16" y="4" width="1" height="1"/><rect x="2" y="2" width="1" height="1"/><rect x="6" y="2" width="1" height="1"/><rect x="10" y="2" width="1" height="1"/><rect x="14" y="2" width="1" height="1"/></g></svg>
<div style="left:231px;top:303px;width:1063px;height:555px;border:1px solid #a7b0c6;background:#d5daea"></div>
<div style="left:231px;top:276px;width:123px;height:27px;border:1px solid #a7b0c6;border-bottom:none;background:#ccd2e3"></div>
<div style="left:353px;top:275px;width:142px;height:29px;border:1px solid #a7b0c6;border-bottom:none;background:#d5daea"></div>
<svg style="left:243px;top:279.5px" width="16" height="17" viewBox="0 0 16 17"><rect x=".8" y=".8" width="14" height="15.200" fill="#fff"/><path d="M8.200 1h4l2.300 2.300v5H8.200z" fill="#fff" stroke="#a6a6a6" stroke-width=".8"/><path d="M12.200 1v2.300h2.300" fill="none" stroke="#a6a6a6" stroke-width=".7"/><rect x=".6" y=".6" width="6.800" height="6.800" fill="#fff" stroke="#7c7c7c" stroke-width=".8"/><text x="4" y="6.300" font-size="6.500" font-weight="bold" font-family="Liberation Sans,sans-serif" text-anchor="middle" fill="#000">A</text><rect x="8.200" y="8.800" width="6.600" height="7" fill="#fff" stroke="#7c7c7c" stroke-width=".8"/><text x="11.500" y="14.800" font-size="6.500" font-weight="bold" font-family="Liberation Sans,sans-serif" text-anchor="middle" fill="#000">P</text><path d="M1.500 10h5.500M1.500 12.200h5.500M1.500 14.400h5.500" stroke="#7e90bc" stroke-width="1"/></svg>
<span class="t" style="left:261.5px;top:281px;letter-spacing:-0.11px;">Súvaha k 3/2022</span>
<svg style="left:365px;top:279.5px" width="16" height="17" viewBox="0 0 16 17"><rect x=".8" y=".8" width="14" height="15.200" fill="#fff"/><path d="M8.200 1h4l2.300 2.300v5H8.200z" fill="#fff" stroke="#a6a6a6" stroke-width=".8"/><path d="M12.200 1v2.300h2.300" fill="none" stroke="#a6a6a6" stroke-width=".7"/><rect x=".6" y=".6" width="6.800" height="6.800" fill="#fff" stroke="#7c7c7c" stroke-width=".8"/><text x="4" y="6.300" font-size="6.500" font-weight="bold" font-family="Liberation Sans,sans-serif" text-anchor="middle" fill="#000">N</text><rect x="8.200" y="8.800" width="6.600" height="7" fill="#fff" stroke="#7c7c7c" stroke-width=".8"/><text x="11.500" y="14.800" font-size="6.500" font-weight="bold" font-family="Liberation Sans,sans-serif" text-anchor="middle" fill="#000">V</text><path d="M1.500 10h5.500M1.500 12.200h5.500M1.500 14.400h5.500" stroke="#7e90bc" stroke-width="1"/></svg>
<span class="t" style="left:384px;top:281px;letter-spacing:-0.13px;">Výsledovka k 3/2022</span>
<div style="left:244px;top:320px;width:9px;height:1px;background:#18265a"></div>
<div style="left:244px;top:323px;width:9px;height:1px;background:#18265a"></div>
<div style="left:244px;top:326px;width:9px;height:1px;background:#18265a"></div>
<div style="left:262px;top:311.5px;width:1px;height:25px;background:#8b93aa"></div>
<svg style="left:272px;top:315.5px" width="13" height="15" viewBox="0 0 13 15"><path d="M.8 .6h6.900l4.100 4.100v9.300H.8z" fill="#d9d9d9" stroke="#bdbdbd" stroke-width="1"/><path d="M7.700 .6v4.100h4.100" fill="#e6e6e6" stroke="#bdbdbd" stroke-width="1"/></svg>
<svg style="left:297.5px;top:322px" width="5.5" height="3" viewBox="0 0 5.5 3"><path d="M0 0L5.5 0L2.75 3Z" fill="#9aa0b0"/></svg>
<svg style="left:312.5px;top:316.5px" width="17" height="13" viewBox="0 0 17 13"><defs><linearGradient id="fo" x1="0" y1="0" x2="0" y2="1"><stop offset="0" stop-color="#fde7a4"/><stop offset="1" stop-color="#f7a51e"/></linearGradient></defs><path d="M.7 11.800V2.200c0-.7.500-1.200 1.200-1.200h3l1.500 1.700h5.600c.7 0 1.200.5 1.200 1.200v1.500" fill="#f5b246" stroke="#d1801a" stroke-width="1.100" stroke-linejoin="round"/><path d="M3.600 5.200h12.500l-3 6.900H.8z" fill="url(#fo)" stroke="#d1801a" stroke-width="1.100" stroke-linejoin="round"/></svg>
<svg style="left:340px;top:315px" width="16" height="16" viewBox="0 0 16 16"><path d="M.5 13.600C3.400 9.300 9 3.800 14.800 .6 11 5.500 6.600 11.400 3.700 15.300 2.600 16.400 .1 15.500 .5 13.600z" fill="#b4b6bc"/><path d="M2.800 1.200C6.500 5.200 10.800 10 15.200 14.200" stroke="#b9bbc2" stroke-width="1.400" fill="none" stroke-linecap="round"/></svg>
<div style="left:364px;top:311px;width:1px;height:25px;background:#8b93aa"></div>
<svg style="left:374.5px;top:315.5px" width="13" height="14" viewBox="0 0 13 14"><rect x="3" y=".6" width="7" height="6" fill="#e9f3fe" stroke="#5c9ae6" stroke-width="1"/><path d="M1.200 6.500h10.600c.6 0 1 .4 1 1v4.300c0 .6-.4 1-1 1H1.200c-.6 0-1-.4-1-1V7.500c0-.6.400-1 1-1z" fill="#f2f3f6" stroke="#4a4f5c" stroke-width=".9"/><rect x="2.600" y="10.600" width="7.800" height="2" fill="#fff" stroke="#6c7280" stroke-width=".7"/><rect x="9.300" y="8.200" width="1.400" height="1.200" fill="#3fae3a"/></svg>
<span class="t" style="left:393px;top:316px;letter-spacing:-0.57px;">Tlač</span>
<svg style="left:422px;top:316px" width="16" height="14" viewBox="0 0 16 14"><path d="M3 .8h3.200l.5 2 .8 10.600H.5L1.800 4.500z" fill="#2f4f96"/><path d="M13 .8H9.800l-.5 2-.8 10.600h7L14.200 4.500z" fill="#2f4f96"/><rect x="6.200" y="4" width="3.600" height="3.400" fill="#22386e"/><path d="M2.600 2.200h3M10.400 2.200h3" stroke="#8fb0ea" stroke-width="1"/><path d="M1.500 9h5M9.500 9h5" stroke="#86a5e0" stroke-width="1.400"/><path d="M1.200 11.600h5.500M9.300 11.600h5.500" stroke="#5676bc" stroke-width="1.200"/><path d="M2 5.500h4M10 5.500h4" stroke="#5878be" stroke-width="1"/></svg>
<svg style="left:448.5px;top:315.5px" width="15" height="15" viewBox="0 0 15 15"><defs><linearGradient id="fu" x1="0" y1="0" x2="1" y2="0"><stop offset="0" stop-color="#fdd27a"/><stop offset=".5" stop-color="#ffe9b8"/><stop offset="1" stop-color="#f8a628"/></linearGradient></defs><path d="M.6 .8h13.800v1.800L9.300 7.800v5.800l-3.600-.1V7.800L.6 2.600z" fill="url(#fu)" stroke="#e08c14" stroke-width="1.100" stroke-linejoin="round"/><path d="M1.500 1.600h12" stroke="#f8a628" stroke-width="1.200"/></svg>
<div style="left:472px;top:311px;width:1px;height:25px;background:#8b93aa"></div>
<svg style="left:483px;top:316px" width="16" height="14" viewBox="0 0 16 14"><path d="M2 1.200C.8 2.200.6 4 1.600 5.200c.9 1 2.200 1.200 3.300.8l6.800 7c.5.500 1.300.5 1.800 0s.5-1.300 0-1.800L6.600 4.400c.4-1.100.2-2.400-.7-3.300L4.600 3.300 3 3.100 2.600 1.700z" fill="#c3c8d2" stroke="#6a7080" stroke-width=".7"/><path d="M1.300 12.400L9.400 4.200" stroke="#b56a10" stroke-width="3" stroke-linecap="round"/><path d="M1.500 12.200L9.300 4.300" stroke="#f6b648" stroke-width="1.600" stroke-linecap="round"/><path d="M7.600 1.200l2.600-.8c2.200.4 4 1.800 5.200 4l-1.600 1.600c-.8-1.200-1.800-1.900-2.600-2.100L9.800 5.300z" fill="#aeb4c0" stroke="#5e6474" stroke-width=".7" stroke-linejoin="round"/></svg>
<span class="t" style="left:502.5px;top:316px;letter-spacing:-0.43px;">Funkcie</span>
<svg style="left:542px;top:322px" width="5.5" height="3" viewBox="0 0 5.5 3"><path d="M0 0L5.5 0L2.75 3Z" fill="#18265a"/></svg>
<svg style="left:562px;top:318.5px" width="12" height="10" viewBox="0 0 12 10"><rect x=".6" y=".6" width="10.800" height="8.800" fill="#fff" stroke="#7da2d8" stroke-width="1.200"/><rect x="2.600" y="3" width="2.600" height="4" fill="#d4d8e0"/><rect x="6.600" y="3" width="2.600" height="4" fill="#d4d8e0"/></svg>
<span class="t" style="left:579.5px;top:316px;letter-spacing:-0.51px;">Ďalšie</span>
<svg style="left:611px;top:322px" width="5.5" height="3" viewBox="0 0 5.5 3"><path d="M0 0L5.5 0L2.75 3Z" fill="#18265a"/></svg>
<div style="left:237px;top:338px;width:1051px;height:514px;background:#fff;border:1px solid #a7b0c6"></div>
<div style="left:238px;top:339px;width:1049px;height:19px;background:linear-gradient(#ffffff,#f2f3f9)"></div>
<div style="left:238px;top:358px;width:1049px;height:1px;background:#c9cddc"></div>
<div style="left:256px;top:339px;width:1px;height:19px;background:#d4d7e4"></div>
<div style="left:296px;top:339px;width:1px;height:19px;background:#d4d7e4"></div>
<div style="left:603px;top:339px;width:1px;height:19px;background:#d4d7e4"></div>
<div style="left:635px;top:339px;width:1px;height:19px;background:#d4d7e4"></div>
<div style="left:710px;top:339px;width:1px;height:19px;background:#d4d7e4"></div>
<div style="left:785px;top:339px;width:1px;height:19px;background:#d4d7e4"></div>
<div style="left:855px;top:339px;width:1px;height:19px;background:#d4d7e4"></div>
<div style="left:930px;top:339px;width:1px;height:19px;background:#d4d7e4"></div>
<div style="left:1005px;top:339px;width:1px;height:19px;background:#d4d7e4"></div>
<svg style="left:242px;top:343.5px" width="9" height="9" viewBox="0 0 11 11"><g fill="#fff" stroke="#a4a4a4" stroke-width=".9"><circle cx="5.500" cy="2.400" r="1.700"/><circle cx="8.400" cy="4.500" r="1.700"/><circle cx="7.300" cy="7.900" r="1.700"/><circle cx="3.700" cy="7.900" r="1.700"/><circle cx="2.600" cy="4.500" r="1.700"/></g><circle cx="5.500" cy="5.500" r="2.900" fill="#fff"/><circle cx="5.500" cy="5.500" r="1.100" fill="none" stroke="#a4a4a4" stroke-width=".8"/></svg>
<span class="t" style="left:260px;top:341px;letter-spacing:0.11px;">Ozn...</span>
<span class="t" style="left:300px;top:341px;letter-spacing:-0.29px;">Definícia «Definícia</span>
<span class="t" style="left:610.5px;top:341px;letter-spacing:-0.70px;">...</span>
<svg style="left:622px;top:346px" width="8.5" height="4" viewBox="0 0 8.5 4"><path d="M0 4L8.5 4L4.25 0Z" fill="#6f7480"/></svg>
<span class="t" style="right:601px;top:341px;letter-spacing:-0.13px;">AktStav</span>
<span class="t" style="right:526px;top:341px;letter-spacing:-0.21px;">AktStavZaok</span>
<span class="t b" style="right:456px;top:341px;color:#1a1a1a;transform:scaleX(1.032);transform-origin:100% 50%;">MinRok</span>
<span class="t b" style="left:867px;top:341px;color:#1a1a1a;transform:scaleX(1.061);transform-origin:0 50%;">MinRokZ...</span>
<span class="t" style="left:937px;top:341px;letter-spacing:-0.21px;">Definícia «D...</span>
<div style="left:238px;top:358px;width:1049px;height:493px;overflow:hidden">
<div style="left:20px;top:2px;width:37px;height:18px;background:#fff8de;border:1px dotted #8c8c7c"></div>
<div style="left:18px;top:21px;width:750px;height:1px;background:#d0d0e8"></div>
<span class="t blue" style="left:26.5px;top:4px;">*</span>
<span class="t blue" style="left:62.4px;top:4px;letter-spacing:-0.10px;">Výnosy z hodpodárskej činnosti spolu (r.02 až 07)</span>
<span class="t blue" style="right:655px;top:4px;">1</span>
<span class="t blue" style="right:285px;top:4px;">300,00</span>
<div style="left:18px;top:42px;width:750px;height:1px;background:#d0d0e8"></div>
<span class="t k" style="left:22px;top:25px;">I.</span>
<span class="t k" style="left:62.4px;top:25px;letter-spacing:0.05px;">Tržby z predaja tovaru (604, 607)</span>
<span class="t k" style="right:655px;top:25px;">2</span>
<span class="t k" style="right:285px;top:25px;">1,00</span>
<div style="left:18px;top:63px;width:750px;height:1px;background:#d0d0e8"></div>
<span class="t k" style="left:22px;top:46px;">II.</span>
<span class="t k" style="left:62.4px;top:46px;letter-spacing:-0.02px;">Tržby z predaja vlastných výrobkov a služieb (601,602,606)</span>
<span class="t k" style="right:655px;top:46px;">3</span>
<span class="t k" style="right:285px;top:46px;">2,00</span>
<div style="left:18px;top:84px;width:750px;height:1px;background:#d0d0e8"></div>
<span class="t k" style="left:22px;top:67px;">III.</span>
<span class="t k" style="left:62.4px;top:67px;letter-spacing:-0.08px;">Zmeny stavu vnútroorganizačných zásob (sk.61)</span>
<span class="t k" style="right:655px;top:67px;">4</span>
<span class="t k" style="right:285px;top:67px;">3,00</span>
<div style="left:18px;top:105px;width:750px;height:1px;background:#d0d0e8"></div>
<span class="t k" style="left:22px;top:88px;">IV.</span>
<span class="t k" style="left:62.4px;top:88px;letter-spacing:-0.04px;">Aktivácia (sk.62)</span>
<span class="t k" style="right:655px;top:88px;">5</span>
<span class="t k" style="right:285px;top:88px;">4,00</span>
<div style="left:18px;top:126px;width:750px;height:1px;background:#d0d0e8"></div>
<span class="t k" style="left:22px;top:109px;">V.</span>
<span class="t k" style="left:62.4px;top:109px;letter-spacing:-0.06px;">Tržby z predaja dlhodobého majetku a materiálu (641, 642)</span>
<span class="t k" style="right:655px;top:109px;">6</span>
<span class="t k" style="right:285px;top:109px;">5,00</span>
<div style="left:18px;top:147px;width:750px;height:1px;background:#d0d0e8"></div>
<span class="t k" style="left:22px;top:130px;">VI.</span>
<span class="t k" style="left:62.4px;top:130px;letter-spacing:0.02px;">Ostatné výnosy z hospodárskej činnosti (644,645,646,648,...</span>
<span class="t k" style="right:655px;top:130px;">7</span>
<span class="t k" style="right:285px;top:130px;">6,00</span>
<div style="left:18px;top:168px;width:750px;height:1px;background:#d0d0e8"></div>
<span class="t blue" style="left:26.5px;top:151px;">*</span>
<span class="t blue" style="left:62.4px;top:151px;letter-spacing:-0.45px;">NÁKLADY NA HOSPODÁRSKU ČINNOSŤ spolu (r.09 až 17)</span>
<span class="t blue" style="right:655px;top:151px;">8</span>
<span class="t b blue" style="right:435.5px;top:151px;transform:scaleX(1.088);transform-origin:100% 50%;">1 813,00</span>
<span class="t b blue" style="right:360.5px;top:151px;transform:scaleX(1.088);transform-origin:100% 50%;">1 813,00</span>
<span class="t blue" style="right:285px;top:151px;">301,00</span>
<div style="left:18px;top:189px;width:750px;height:1px;background:#d0d0e8"></div>
<span class="t k" style="left:22px;top:172px;">A.</span>
<span class="t k" style="left:62.4px;top:172px;letter-spacing:-0.01px;">Náklady vynaložené na obstaranie predaného tovaru (504,5...</span>
<span class="t k" style="right:655px;top:172px;">9</span>
<span class="t k" style="right:285px;top:172px;">7,00</span>
<div style="left:18px;top:210px;width:750px;height:1px;background:#d0d0e8"></div>
<span class="t k" style="left:22px;top:193px;">B.</span>
<span class="t k" style="left:62.4px;top:193px;">Spotreba materiálu, energie, nesklad. dodávok (501,502,50...</span>
<span class="t k" style="right:655px;top:193px;">10</span>
<span class="t b k" style="right:435.5px;top:193px;transform:scaleX(1.084);transform-origin:100% 50%;">102,00</span>
<span class="t b k" style="right:360.5px;top:193px;transform:scaleX(1.084);transform-origin:100% 50%;">102,00</span>
<span class="t k" style="right:285px;top:193px;">8,00</span>
<div style="left:18px;top:231px;width:750px;height:1px;background:#d0d0e8"></div>
<span class="t k" style="left:22px;top:214px;">C.</span>
<span class="t k" style="left:62.4px;top:214px;letter-spacing:-0.12px;">Služby (sk.51)</span>
<span class="t k" style="right:655px;top:214px;">11</span>
<span class="t b k" style="right:435.5px;top:214px;transform:scaleX(1.104);transform-origin:100% 50%;">1 011,00</span>
<span class="t b k" style="right:360.5px;top:214px;transform:scaleX(1.104);transform-origin:100% 50%;">1 011,00</span>
<span class="t k" style="right:285px;top:214px;">9,00</span>
<div style="left:19px;top:232px;width:748px;height:20px;background:#fff8de"></div>
<div style="left:18px;top:252px;width:750px;height:1px;background:#d0d0e8"></div>
<span class="t k" style="left:22px;top:235px;">D.</span>
<span class="t k" style="left:62.4px;top:235px;letter-spacing:-0.10px;">Osobné náklady (sk.52)</span>
<span class="t k" style="right:655px;top:235px;">12</span>
<span class="t k" style="right:285px;top:235px;">10,00</span>
<div style="left:18px;top:273px;width:750px;height:1px;background:#d0d0e8"></div>
<span class="t k" style="left:22px;top:256px;">E.</span>
<span class="t k" style="left:62.4px;top:256px;letter-spacing:-0.05px;">Dane a poplatky (sk.53)</span>
<span class="t k" style="right:655px;top:256px;">13</span>
<span class="t k" style="right:285px;top:256px;">11,00</span>
<div style="left:18px;top:294px;width:750px;height:1px;background:#d0d0e8"></div>
<span class="t k" style="left:22px;top:277px;">F.</span>
<span class="t k" style="left:62.4px;top:277px;letter-spacing:-0.10px;">Odpisy a opravné položky k dlhodobému majetku (551, 553)</span>
<span class="t k" style="right:655px;top:277px;">14</span>
<span class="t k" style="right:285px;top:277px;">12,00</span>
<div style="left:18px;top:315px;width:750px;height:1px;background:#d0d0e8"></div>
<span class="t k" style="left:22px;top:298px;">G.</span>
<span class="t k" style="left:62.4px;top:298px;letter-spacing:-0.05px;">Zostatková cena predaného majetku a materiálu (541,542)</span>
<span class="t k" style="right:655px;top:298px;">15</span>
<span class="t k" style="right:285px;top:298px;">13,00</span>
<div style="left:18px;top:336px;width:750px;height:1px;background:#d0d0e8"></div>
<span class="t k" style="left:22px;top:319px;">H.</span>
<span class="t k" style="left:62.4px;top:319px;letter-spacing:-0.09px;">Opravné položky k pohľadávkam (547)</span>
<span class="t k" style="right:655px;top:319px;">16</span>
<span class="t k" style="right:285px;top:319px;">14,00</span>
<div style="left:18px;top:357px;width:750px;height:1px;background:#d0d0e8"></div>
<span class="t k" style="left:22px;top:340px;">I.</span>
<span class="t k" style="left:62.4px;top:340px;letter-spacing:0.02px;">Ostatné náklady na hospod. činnosť (543,544,545,546,548...</span>
<span class="t k" style="right:655px;top:340px;">17</span>
<span class="t b k" style="right:435.5px;top:340px;transform:scaleX(1.084);transform-origin:100% 50%;">700,00</span>
<span class="t b k" style="right:360.5px;top:340px;transform:scaleX(1.084);transform-origin:100% 50%;">700,00</span>
<span class="t k" style="right:285px;top:340px;">15,00</span>
<div style="left:18px;top:378px;width:750px;height:1px;background:#d0d0e8"></div>
<span class="t blue" style="left:25.5px;top:361px;">**</span>
<span class="t blue" style="left:62.4px;top:361px;letter-spacing:-0.10px;">Výsledok hospodárenia z hospodárskej činnosti (r.01-08)</span>
<span class="t blue" style="right:655px;top:361px;">18</span>
<span class="t b blue" style="right:435.5px;top:361px;transform:scaleX(1.171);transform-origin:100% 50%;">- 1 813,00</span>
<span class="t b blue" style="right:360.5px;top:361px;transform:scaleX(1.171);transform-origin:100% 50%;">- 1 813,00</span>
<span class="t blue" style="right:285px;top:361px;">350,00</span>
<div style="left:18px;top:399px;width:750px;height:1px;background:#d0d0e8"></div>
<span class="t blue" style="left:22px;top:382px;">*</span>
<span class="t blue" style="left:62.4px;top:382px;">PRIDANÁ HODNOTA (r.02+03+04+05-09-10-11)</span>
<span class="t blue" style="right:655px;top:382px;">19</span>
<span class="t b blue" style="right:435.5px;top:382px;transform:scaleX(1.185);transform-origin:100% 50%;">- 1 113,00</span>
<span class="t b blue" style="right:360.5px;top:382px;transform:scaleX(1.185);transform-origin:100% 50%;">- 1 113,00</span>
<span class="t blue" style="right:285px;top:382px;">330,00</span>
<div style="left:18px;top:420px;width:750px;height:1px;background:#d0d0e8"></div>
<span class="t blue" style="left:22px;top:403px;">*</span>
<span class="t blue" style="left:62.4px;top:403px;letter-spacing:-0.39px;">VÝNOSY Z FINANČNEJ ČINNOSTI (r.21 až 26)</span>
<span class="t blue" style="right:655px;top:403px;">20</span>
<span class="t blue" style="right:285px;top:403px;">302,00</span>
<div style="left:18px;top:441px;width:750px;height:1px;background:#d0d0e8"></div>
<span class="t k" style="left:22px;top:424px;">VII.</span>
<span class="t k" style="left:62.4px;top:424px;letter-spacing:-0.05px;">Tržby z predaja cenných papierov a podielov (661)</span>
<span class="t k" style="right:655px;top:424px;">21</span>
<span class="t k" style="right:285px;top:424px;">16,00</span>
<div style="left:18px;top:462px;width:750px;height:1px;background:#d0d0e8"></div>
<span class="t k" style="left:22px;top:445px;">VIII.</span>
<span class="t k" style="left:62.4px;top:445px;letter-spacing:-0.10px;">Výnosy z dlhodobého finančného majetku (665)</span>
<span class="t k" style="right:655px;top:445px;">22</span>
<span class="t k" style="right:285px;top:445px;">17,00</span>
<div style="left:18px;top:483px;width:750px;height:1px;background:#d0d0e8"></div>
<span class="t k" style="left:22px;top:466px;">IX.</span>
<span class="t k" style="left:62.4px;top:466px;letter-spacing:-0.08px;">Výnosy z krátkodobého finančného majetku (666)</span>
<span class="t k" style="right:655px;top:466px;">23</span>
<span class="t k" style="right:285px;top:466px;">18,00</span>
<div style="left:18px;top:504px;width:750px;height:1px;background:#d0d0e8"></div>
<span class="t k" style="left:22px;top:487px;">X.</span>
<span class="t k" style="left:62.4px;top:487px;letter-spacing:-0.62px;">VÝNOSOVÉ ÚROKY (662)</span>
<span class="t k" style="right:655px;top:487px;">24</span>
<span class="t k" style="right:285px;top:487px;">19,00</span>
<div style="left:0px;top:0px;width:18px;height:493px;background:#f8f9fc"></div>
<div style="left:18px;top:0px;width:1px;height:493px;background:#d0d0e8"></div>
<div style="left:58px;top:0px;width:1px;height:493px;background:#d0d0e8"></div>
<div style="left:365px;top:0px;width:1px;height:493px;background:#d0d0e8"></div>
<div style="left:397px;top:0px;width:1px;height:493px;background:#d0d0e8"></div>
<div style="left:472px;top:0px;width:1px;height:493px;background:#d0d0e8"></div>
<div style="left:547px;top:0px;width:1px;height:493px;background:#d0d0e8"></div>
<div style="left:617px;top:0px;width:1px;height:493px;background:#d0d0e8"></div>
<div style="left:692px;top:0px;width:1px;height:493px;background:#d0d0e8"></div>
<div style="left:767px;top:0px;width:1px;height:493px;background:#d0d0e8"></div>
</div>
<svg style="left:246px;top:366px" width="4" height="7.5" viewBox="0 0 4 7.5"><path d="M0 0L4 3.75L0 7.5Z" fill="#18265a"/></svg>
<div style="left:1270px;top:359px;width:17px;height:492px;background:#cfd5e5"></div>
<svg style="left:1274.5px;top:364.5px" width="9" height="4.5" viewBox="0 0 9 4.5"><path d="M0 4.5L9 4.5L4.5 0Z" fill="#6a7a9c"/></svg>
<svg style="left:1274.5px;top:841.5px" width="9" height="4.5" viewBox="0 0 9 4.5"><path d="M0 0L9 0L4.5 4.5Z" fill="#6a7a9c"/></svg>
<div style="left:1274px;top:376px;width:9.5px;height:269.5px;background:#9ba7bb"></div>
<div style="left:1274px;top:380px;width:9.5px;height:2px;background:#5f9a4a"></div>
<div style="left:1283px;top:508px;width:4px;height:12px;background:#b9bac4"></div>
<svg style="left:449px;top:590.5px" width="13" height="20" viewBox="0 0 13 20"><path d="M.8 .9v15.300l3.500-3.300 2.700 6 2.300-1-2.600-5.800h4.800z" fill="#fff" stroke="#000" stroke-width="1.100" stroke-linejoin="round"/></svg>
<div style="left:8px;top:863px;width:1292px;height:31px;background:#d5daea;border:1px solid #b0b8d0;border-top:1px solid #e2e6f0"></div>
<svg style="left:16.5px;top:869.5px" width="17" height="17" viewBox="0 0 17 17"><path d="M1 7.500a3.600 3.600 0 1 1 5.800 2.800l4.700 3.400-.6 1.800-2.700-.6-1-2-2.500-1.400A3.600 3.600 0 0 1 1 7.500z" fill="#eef3fb" stroke="#7fa0d8" stroke-width="1.100" stroke-linejoin="round"/><circle cx="3.800" cy="6.600" r="1.300" fill="#d3d8e8" stroke="#7fa0d8" stroke-width=".7"/><circle cx="11.200" cy="3.800" r="2.700" fill="#f4c68a" stroke="#a86a1c" stroke-width=".6"/><path d="M8.500 3.200c.2-2 1.500-2.700 2.800-2.700s2.600.8 2.700 2.700c-1.200-.6-3.800-.8-5.500 0z" fill="#6e3c10"/><path d="M7.200 11.500c.2-3 1.800-4.500 4-4.500s3.800 1.500 4 4.500c-2 1-6 1-8 0z" fill="#4f8ae0" stroke="#2a5db4" stroke-width=".6"/></svg>
<span class="t g" style="left:36.5px;top:871px;letter-spacing:-0.26px;">Dudášová</span>
<svg style="left:99.5px;top:871.5px" width="15" height="12" viewBox="0 0 15 12"><rect x=".4" y=".4" width="14.200" height="11.200" fill="#fff" stroke="#c8ccd8" stroke-width=".8"/><rect x=".8" y="4.200" width="13.400" height="3.600" fill="#1f4cc4"/><rect x=".8" y="7.800" width="13.400" height="3.400" fill="#e31e2c"/><path d="M3.200 2.600h4.400v3.800c0 1.500-1.200 2.400-2.200 2.900-1-.5-2.200-1.400-2.200-2.900z" fill="#e31e2c" stroke="#fff" stroke-width=".7"/><path d="M5.400 3.600v3.800M4.300 4.800h2.200M4.100 5.900h2.600" stroke="#fff" stroke-width=".6"/><path d="M3.800 7.400c.5-.9 1-.9 1.600-.3.600-.6 1.100-.6 1.600.3-.4.800-1 1.300-1.600 1.600-.6-.3-1.200-.8-1.600-1.600z" fill="#1f4cc4"/></svg>
<svg style="left:134.5px;top:870px" width="13" height="16" viewBox="0 0 13 16"><defs><linearGradient id="dbg" x1="0" y1="0" x2="1" y2="0"><stop offset="0" stop-color="#d79a1e"/><stop offset=".35" stop-color="#fbe08a"/><stop offset="1" stop-color="#c88a14"/></linearGradient></defs><path d="M.6 2.800v10.400c0 1.300 2.600 2.300 5.900 2.300s5.900-1 5.900-2.300V2.800z" fill="url(#dbg)" stroke="#a87412" stroke-width=".9"/><ellipse cx="6.500" cy="2.800" rx="5.900" ry="2.200" fill="#fce28e" stroke="#a87412" stroke-width=".9"/><path d="M.6 6.300c0 1.300 2.600 2.300 5.900 2.300s5.900-1 5.900-2.300M.6 9.800c0 1.300 2.600 2.300 5.900 2.300s5.900-1 5.900-2.300" fill="none" stroke="#b07c14" stroke-width=".8"/></svg>
<span class="t g" style="left:153px;top:871px;letter-spacing:-0.16px;">IVANAD test (MySQL/IVANADtest, V2246)</span>
<div style="left:366px;top:866px;width:1px;height:25px;background:#eef0f6"></div>
<svg style="left:381.5px;top:870.5px" width="15" height="15" viewBox="0 0 15 15"><defs><radialGradient id="okc" cx=".4" cy=".35" r=".7"><stop offset="0" stop-color="#f2b060"/><stop offset="1" stop-color="#c06c1c"/></radialGradient></defs><circle cx="7.500" cy="7.500" r="6.900" fill="url(#okc)" stroke="#a85a14" stroke-width=".9"/><path d="M3.800 7.400l2.700 3 4.800-5.600" fill="none" stroke="#fff8e8" stroke-width="2.100" stroke-linecap="round" stroke-linejoin="round"/></svg>
<span class="t g" style="left:401.5px;top:871px;letter-spacing:0.02px;">2.32.532</span>
<div style="left:456px;top:866px;width:1px;height:25px;background:#eef0f6"></div>
<svg style="left:467px;top:870px" width="16" height="16" viewBox="0 0 16 16"><rect x=".6" y=".6" width="12.400" height="13.600" fill="#fbfcfa" stroke="#8a9a86" stroke-width="1"/><rect x="3" y="2.400" width="7.600" height="2.200" fill="#e4e8e0" stroke="#9aa296" stroke-width=".6"/><path d="M2.600 6.600h8.400" stroke="#b4bcb0" stroke-width=".9"/><circle cx="4.300" cy="9.300" r="2" fill="#e0302a"/><path d="M2.800 10.400v3.800l1.500-1 1.500 1v-3.800z" fill="#e0302a"/><circle cx="11.300" cy="11.500" r="4.100" fill="#3eb030" stroke="#2a8420" stroke-width=".8"/><path d="M9.100 11.600l1.700 1.800 2.800-3.400" fill="none" stroke="#fff" stroke-width="1.600" stroke-linecap="round" stroke-linejoin="round"/></svg>
<svg style="left:1127px;top:870px" width="16" height="16" viewBox="0 0 16 16"><path d="M.6 .6h9.400l3 3v11.800H.6z" fill="#fff" stroke="#7c8494" stroke-width="1"/><path d="M10 .6v3h3" fill="#eef0f4" stroke="#7c8494" stroke-width=".8"/><path d="M2 3l1 1.200L5 1.800M2 6.600l1 1.200L5 5.400M2 10.200l1 1.200L5 9" fill="none" stroke="#e02a20" stroke-width="1.200"/><path d="M2.200 13.600h2" stroke="#7c8cb0" stroke-width="1"/><path d="M4.800 14.600l1-3.200 7-7.200 2.300 2.300-7 7.100z" fill="#f6c040" stroke="#7a5210" stroke-width=".7" stroke-linejoin="round"/><path d="M12 5l1.800-1.800 2 2L14 7z" fill="#e84030"/><path d="M4.800 14.600l.9-2.800 1.900 1.900z" fill="#2c2c2c"/></svg>
<span class="t g" style="left:1147px;top:871px;letter-spacing:-0.23px;">3 dokončené úlohy</span>
<svg style="left:1283.5px;top:876px" width="6" height="3.5" viewBox="0 0 6 3.5"><path d="M0 0L6 0L3 3.5Z" fill="#6a7a9a"/></svg>
</body></html>
